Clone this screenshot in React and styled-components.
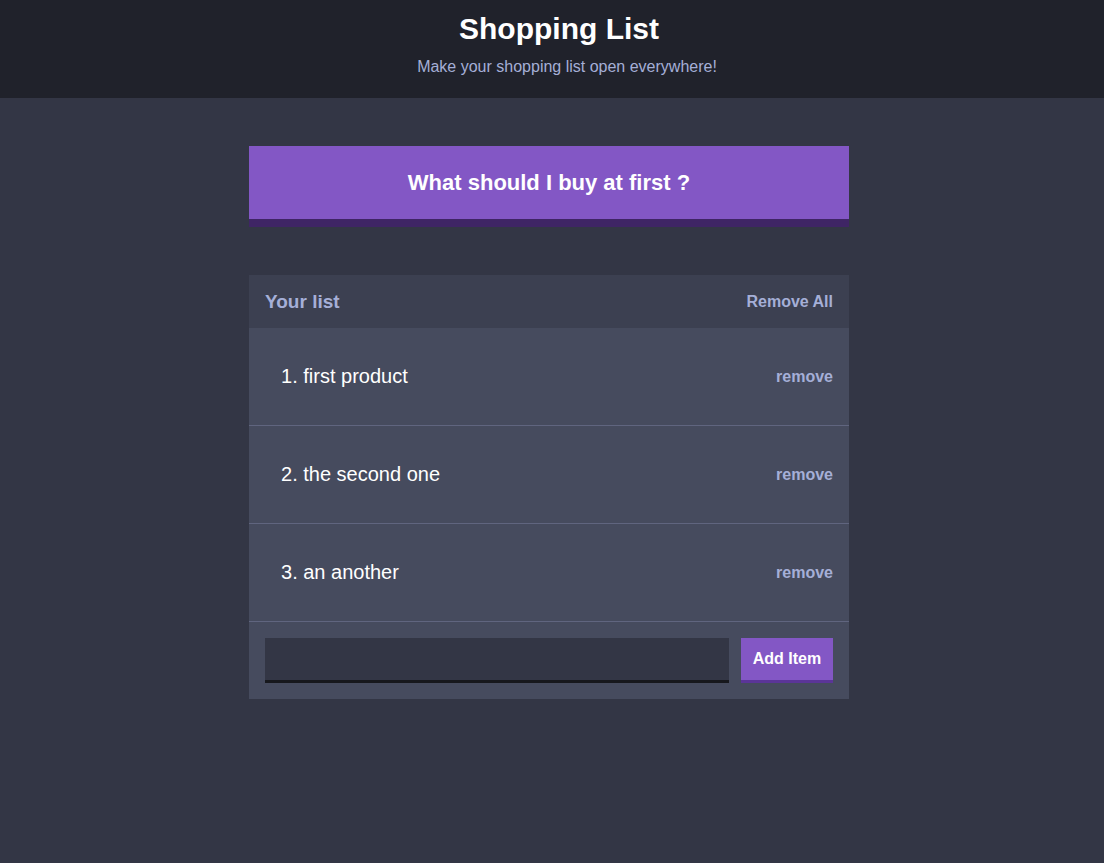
import React from "react";
import styled, { createGlobalStyle } from "styled-components";

const Global = createGlobalStyle`
  html, body { margin: 0; padding: 0; }
  body {
    background: #333645;
    font-family: "Liberation Sans", Arial, sans-serif;
    min-height: 863px;
  }
  * { box-sizing: border-box; }
`;

const Header = styled.header`
  background: #20222b;
  height: 98px;
  display: flex;
  flex-direction: column;
  align-items: center;
  padding-top: 11px;
`;

const Title = styled.h1`
  margin: 0 0 0 14px;
  color: #fff;
  font-size: 30px;
  font-weight: 700;
  line-height: 35px;
`;

const Subtitle = styled.h2`
  margin: 12px 0 0 30px;
  color: #a5afd7;
  font-size: 16px;
  font-weight: 400;
  line-height: 18px;
`;

const Container = styled.main`
  width: 600px;
  margin: 48px 0 0 calc(50% - 303px);
`;

const ActionButton = styled.button`
  display: block;
  width: 100%;
  height: 81px;
  background: #8357c5;
  border: none;
  border-bottom: 8px solid #3f2565;
  color: #fff;
  font-family: inherit;
  font-size: 22px;
  font-weight: 700;
  padding: 0;
  cursor: pointer;
`;

const Card = styled.section`
  margin-top: 48px;
  background: #464b5e;
`;

const CardHeader = styled.div`
  display: flex;
  justify-content: space-between;
  align-items: center;
  height: 53px;
  padding: 0 16px;
  background: #3c4051;
`;

const CardTitle = styled.h3`
  margin: 0;
  color: #a5afd7;
  font-size: 19px;
  font-weight: 700;
`;

const LinkButton = styled.button`
  background: none;
  border: none;
  padding: 0;
  color: #a5afd7;
  font-family: inherit;
  font-weight: 700;
  font-size: 16px;
  cursor: pointer;
`;

const Item = styled.div`
  display: flex;
  justify-content: space-between;
  align-items: center;
  height: 98px;
  padding: 0 16px 0 32px;
  border-bottom: 1px solid #60657f;
`;

const ItemText = styled.p`
  margin: 0;
  color: #fff;
  font-size: 20px;
`;

const Form = styled.form`
  display: flex;
  align-items: flex-start;
  gap: 12px;
  padding: 16px;
`;

const Input = styled.input`
  flex: 1;
  height: 45px;
  background: #333645;
  border: none;
  border-bottom: 3px solid #17181d;
  color: #fff;
  font-family: inherit;
  font-size: 16px;
  padding: 0 12px;
  outline: none;
`;

const AddButton = styled.button`
  width: 92px;
  height: 45px;
  background: #8357c5;
  border: none;
  border-bottom: 3px solid #5b3598;
  color: #fff;
  font-family: inherit;
  font-size: 16px;
  font-weight: 700;
  padding: 0;
  cursor: pointer;
`;

const items = ["first product", "the second one", "an another"];

export default function App() {
  return (
    <>
      <Global />
      <Header>
        <Title>Shopping List</Title>
        <Subtitle>Make your shopping list open everywhere!</Subtitle>
      </Header>
      <Container>
        <ActionButton>What should I buy at first ?</ActionButton>
        <Card>
          <CardHeader>
            <CardTitle>Your list</CardTitle>
            <LinkButton>Remove All</LinkButton>
          </CardHeader>
          {items.map((t, i) => (
            <Item key={t}>
              <ItemText>
                {i + 1}. {t}
              </ItemText>
              <LinkButton>remove</LinkButton>
            </Item>
          ))}
          <Form onSubmit={(e) => e.preventDefault()}>
            <Input type="text" name="option" />
            <AddButton>Add Item</AddButton>
          </Form>
        </Card>
      </Container>
    </>
  );
}
